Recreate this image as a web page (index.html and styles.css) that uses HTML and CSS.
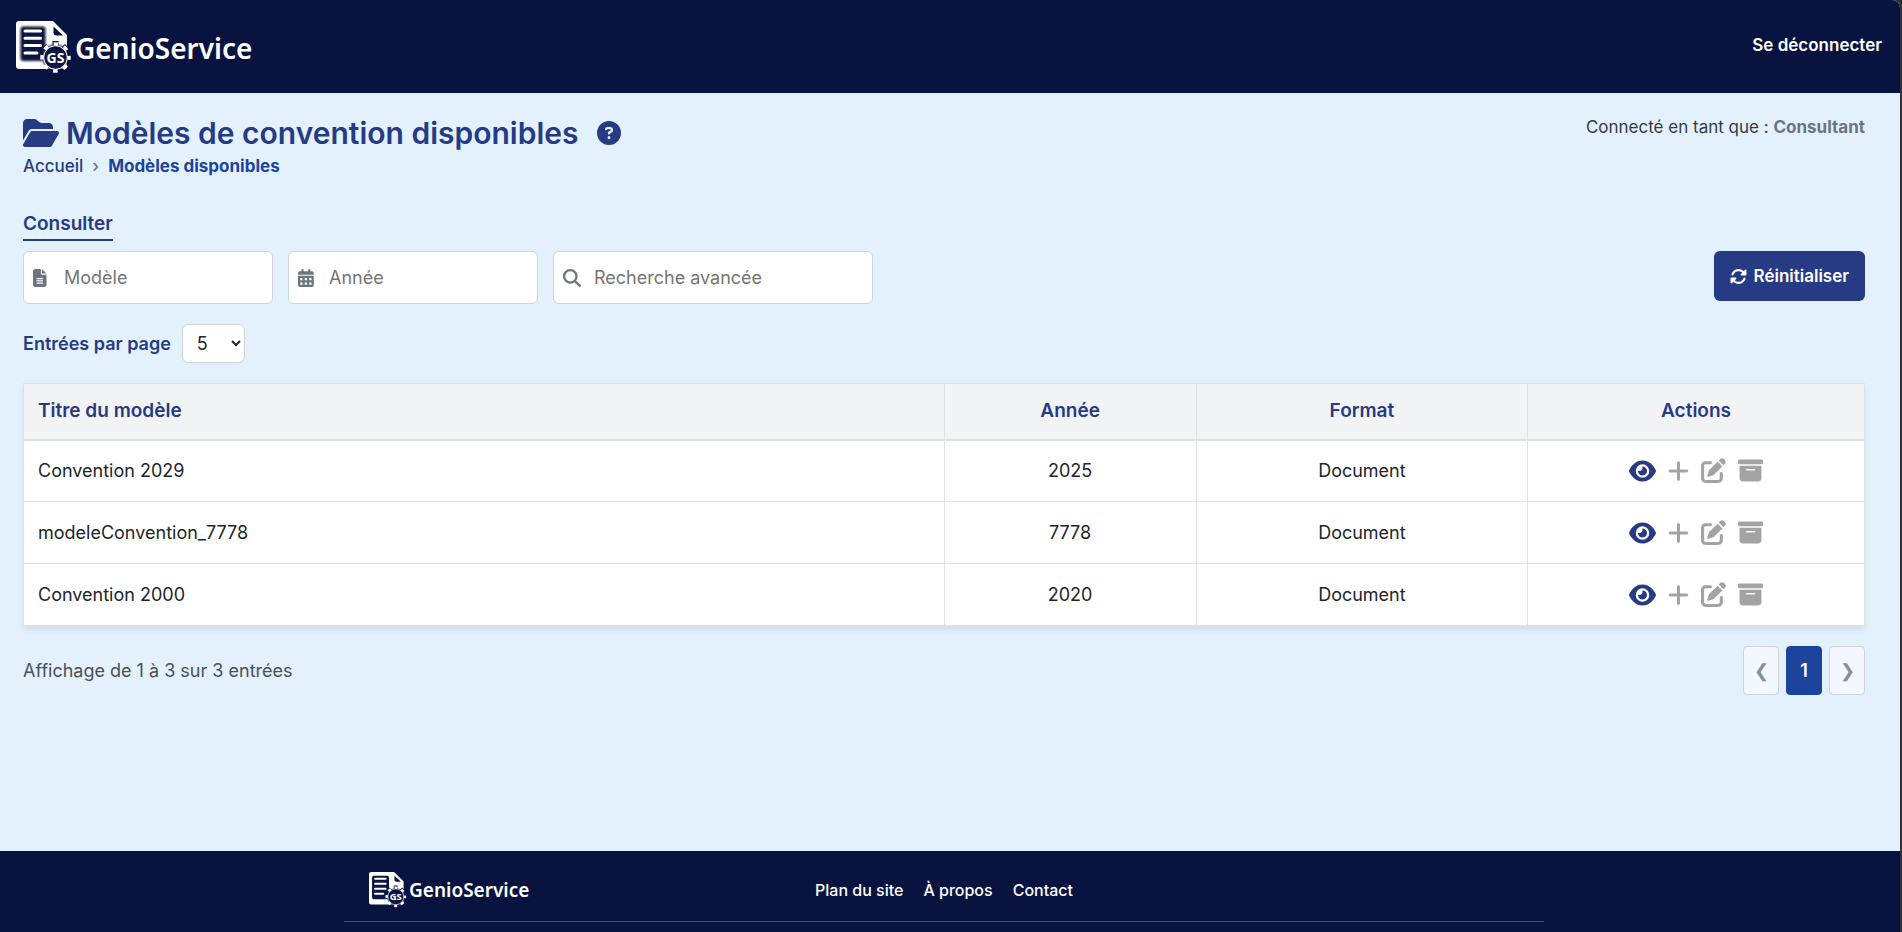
FILE: index.html
```html
<!DOCTYPE html>
<html lang="fr">
<head>
<meta charset="utf-8">
<title>GenioService – Modèles de convention disponibles</title>
<link rel="stylesheet" href="styles.css">
</head>
<body>
<svg class="sprite" aria-hidden="true">
  <filter id="soft" x="-20%" y="-20%" width="140%" height="140%"><feGaussianBlur stdDeviation="1"/></filter>
  <symbol id="logo" viewBox="0 0 56 53">
    <path fill="#fff" fill-rule="evenodd" d="M3 0H37L51 14V46Q51 48 48 48H3Q0 48 0 45V3Q0 0 3 0ZM37.500 5.500V11.500Q37.500 14.500 40.500 14.500H47Z"/>
    <path fill="#08133f" filter="url(#soft)" d="M7 5.500H27Q29.500 5.500 29.500 9V26L27 40H7Q4.500 40 4.500 37V9Q4.500 5.500 7 5.500Z"/>
    <path stroke="#fff" stroke-width="3" stroke-linecap="round" d="M9 10H24.500M9 17.300H24.500M9 24.500H24.500M9 32H21"/>
    <circle cx="39.500" cy="36.500" r="13" fill="#08133f" filter="url(#soft)"/>
    <path stroke="#08133f" stroke-width="6" d="M39.500 20V30M28 25L32 29M51 25L47 29"/>
    <circle cx="39.500" cy="36.500" r="13.500" fill="none" stroke="#fff" stroke-width="3.500" stroke-dasharray="4.500 6.103" stroke-dashoffset="2.250"/>
    <circle cx="39.500" cy="36.500" r="11.800" fill="none" stroke="#fff" stroke-width="1"/>
  </symbol>
  <symbol id="folder" viewBox="0 0 576 512"><path d="M88.700 223.800L0 375.800V96C0 60.700 28.700 32 64 32H181.500c17 0 33.300 6.700 45.300 18.700l26.500 26.500c12 12 28.300 18.700 45.300 18.700H416c35.300 0 64 28.700 64 64v32H144c-22.800 0-43.800 12.100-55.300 31.800zm27.600 16.100C122.100 230 132.600 224 144 224H544c11.500 0 22 6.100 27.700 16.100s5.700 22.200-.1 32.100l-112 192C453.900 474 443.400 480 432 480H32c-11.500 0-22-6.100-27.700-16.100s-5.700-22.200 .1-32.100l112-192z"/></symbol>
  <symbol id="help" viewBox="0 0 512 512"><path d="M256 512A256 256 0 1 0 256 0a256 256 0 1 0 0 512zM169.800 165.300c7.900-22.300 29.100-37.300 52.800-37.300h58.300c34.900 0 63.100 28.300 63.100 63.100c0 22.600-12.100 43.500-31.700 54.800L280 264.400c-.2 13-10.900 23.600-24 23.600c-13.300 0-24-10.700-24-24V250.500c0-8.600 4.600-16.500 12.100-20.800l44.300-25.400c4.700-2.700 7.600-7.700 7.600-13.100c0-8.400-6.800-15.100-15.100-15.100H222.600c-3.400 0-6.400 2.100-7.500 5.300l-.4 1.200c-4.400 12.500-18.200 19-30.600 14.600s-19-18.200-14.600-30.600l.4-1.200zM224 352a32 32 0 1 1 64 0 32 32 0 1 1 -64 0z"/></symbol>
  <symbol id="file" viewBox="0 0 384 512" preserveAspectRatio="xMinYMid"><path d="M64 0C28.700 0 0 28.700 0 64V448c0 35.300 28.700 64 64 64H320c35.300 0 64-28.700 64-64V160H256c-17.700 0-32-14.300-32-32V0H64zM256 0V128H384L256 0zM112 256H272c8.800 0 16 7.200 16 16s-7.200 16-16 16H112c-8.800 0-16-7.200-16-16s7.200-16 16-16zm0 64H272c8.800 0 16 7.200 16 16s-7.200 16-16 16H112c-8.800 0-16-7.200-16-16s7.200-16 16-16zm0 64H272c8.800 0 16 7.200 16 16s-7.200 16-16 16H112c-8.800 0-16-7.200-16-16s7.200-16 16-16z"/></symbol>
  <symbol id="calendar" viewBox="0 0 448 512" preserveAspectRatio="xMinYMid"><path fill-rule="evenodd" d="M128 0c17.700 0 32 14.300 32 32V64H288V32c0-17.700 14.300-32 32-32s32 14.300 32 32V64h48c26.500 0 48 21.500 48 48v48H0V112C0 85.500 21.500 64 48 64H96V32c0-17.700 14.300-32 32-32zM0 192H448V464c0 26.500-21.500 48-48 48H48c-26.500 0-48-21.500-48-48V192zM64 256v64h64v-64zM192 256v64h64v-64zM320 256v64h64v-64zM64 384v64h64v-64zM192 384v64h64v-64zM320 384v64h64v-64z"/></symbol>
  <symbol id="search" viewBox="0 0 512 512"><path d="M416 208c0 45.900-14.900 88.300-40 122.700L502.600 457.400c12.500 12.500 12.500 32.800 0 45.300s-32.800 12.500-45.300 0L330.700 376c-34.400 25.200-76.800 40-122.700 40C93.100 416 0 322.900 0 208S93.100 0 208 0S416 93.100 416 208zM208 352a144 144 0 1 0 0-288 144 144 0 1 0 0 288z"/></symbol>
  <symbol id="rotate" viewBox="0 0 512 512"><path d="M142.900 142.900c62.200-62.200 162.700-62.500 225.300-1L327 183c-6.900 6.900-8.900 17.200-5.200 26.200s12.500 14.800 22.200 14.800H472c13.300 0 24-10.700 24-24V72c0-9.700-5.800-18.500-14.800-22.200s-19.300-1.700-26.200 5.200L413.400 96.600c-87.600-86.500-228.700-86.200-315.800 1C73.200 122 55.600 150.700 44.800 181.400c-5.900 16.700 2.900 34.900 19.500 40.800s34.900-2.900 40.800-19.500c7.700-21.800 20.200-42.300 37.800-59.800zM16 312V440c0 9.700 5.800 18.500 14.800 22.200s19.300 1.700 26.200-5.200l41.600-41.600c87.600 86.500 228.700 86.200 315.800-1c24.400-24.400 42.100-53.100 52.900-83.700c5.900-16.700-2.900-34.900-19.500-40.800s-34.900 2.900-40.800 19.500c-7.700 21.800-20.200 42.300-37.800 59.800c-62.200 62.200-162.700 62.500-225.300 1L185 329c6.900-6.900 8.900-17.200 5.200-26.200s-12.500-14.800-22.200-14.800H40c-13.300 0-24 10.700-24 24z"/></symbol>
  <symbol id="eye" viewBox="0 0 576 512"><path d="M288 32c-80.800 0-145.500 36.800-192.600 80.600C48.600 156 17.300 208 2.500 243.700c-3.300 7.900-3.300 16.700 0 24.600C17.300 304 48.600 356 95.400 399.400C142.500 443.200 207.200 480 288 480s145.500-36.800 192.600-80.600c46.800-43.500 78.100-95.400 93-131.100c3.300-7.900 3.300-16.700 0-24.600c-14.900-35.700-46.200-87.700-93-131.100C433.500 68.800 368.800 32 288 32zM144 256a144 144 0 1 1 288 0 144 144 0 1 1 -288 0zm144-64c0 35.300-28.700 64-64 64c-7.100 0-13.900-1.200-20.300-3.300c-5.500-1.800-11.900 1.600-11.700 7.400c.3 6.900 1.300 13.800 3.200 20.700c13.700 51.200 66.400 81.600 117.600 67.900s81.600-66.400 67.900-117.600c-11.100-41.500-47.800-69.400-88.600-71.100c-5.800-.2-9.200 6.100-7.400 11.700c2.100 6.400 3.300 13.200 3.300 20.300z"/></symbol>
  <symbol id="plus" viewBox="0 0 448 512"><path d="M256 80c0-17.700-14.300-32-32-32s-32 14.300-32 32V224H48c-17.700 0-32 14.300-32 32s14.300 32 32 32H192V432c0 17.700 14.300 32 32 32s32-14.300 32-32V288H400c17.700 0 32-14.300 32-32s-14.300-32-32-32H256V80z"/></symbol>
  <symbol id="edit" viewBox="0 0 512 512"><path d="M471.600 21.700c-21.900-21.900-57.300-21.900-79.200 0L362.300 51.700l97.900 97.900 30.100-30.100c21.900-21.900 21.900-57.300 0-79.200L471.600 21.700zm-299.200 220c-6.100 6.100-10.800 13.600-13.500 21.900l-29.600 88.800c-2.900 8.600-.6 18.100 5.800 24.600s15.900 8.700 24.600 5.800l88.800-29.600c8.200-2.700 15.700-7.400 21.900-13.500L437.700 172.300 339.700 74.300 172.400 241.700zM96 64C43 64 0 107 0 160V416c0 53 43 96 96 96H352c53 0 96-43 96-96V320c0-17.700-14.300-32-32-32s-32 14.300-32 32v96c0 17.700-14.300 32-32 32H96c-17.700 0-32-14.300-32-32V160c0-17.700 14.300-32 32-32h96c17.700 0 32-14.300 32-32s-14.300-32-32-32H96z"/></symbol>
  <symbol id="archive" viewBox="0 0 512 512"><path d="M32 32H480c17.700 0 32 14.300 32 32V96c0 17.700-14.300 32-32 32H32C14.300 128 0 113.700 0 96V64C0 46.300 14.300 32 32 32zm0 128H480V416c0 35.300-28.700 64-64 64H96c-35.300 0-64-28.700-64-64V160zm128 80c0 8.800 7.200 16 16 16H336c8.800 0 16-7.200 16-16s-7.200-16-16-16H176c-8.800 0-16 7.200-16 16z"/></symbol>
</svg>

<div class="page">
  <header class="topbar">
    <a class="brand" href="#"><svg class="brand-mark" viewBox="0 0 56 53"><use href="#logo" width="56" height="53"/><text class="logo-initials" x="39.500" y="41.500" text-anchor="middle">GS</text></svg><span>GenioService</span></a>
    <a class="logout" href="#">Se déconnecter</a>
  </header>

  <main class="main">
    <div class="heading">
      <div>
        <h1 class="title"><svg class="title-icon"><use href="#folder"/></svg><span>Modèles de convention disponibles</span>
          <button class="help" type="button" aria-label="Aide"><svg class="help-icon"><use href="#help"/></svg></button></h1>
        <nav class="crumbs" aria-label="Fil d'Ariane"><a href="#">Accueil</a><span class="sep">›</span><strong>Modèles disponibles</strong></nav>
      </div>
      <p class="user">Connecté en tant que : <strong>Consultant</strong></p>
    </div>

    <nav class="tabs"><a class="tab" href="#">Consulter</a></nav>

    <div class="filters">
      <label class="field"><svg class="field-icon"><use href="#file"/></svg><input type="text" placeholder="Modèle" aria-label="Modèle"></label>
      <label class="field"><svg class="field-icon"><use href="#calendar"/></svg><input type="text" placeholder="Année" aria-label="Année"></label>
      <label class="field field-wide"><svg class="field-icon"><use href="#search"/></svg><input type="text" placeholder="Recherche avancée" aria-label="Recherche avancée"></label>
      <button class="reset" type="button"><svg class="reset-icon"><use href="#rotate"/></svg>Réinitialiser</button>
    </div>

    <div class="per-page">
      <label for="per-page">Entrées par page</label>
      <select id="per-page"><option>5</option><option>10</option><option>25</option></select>
    </div>

    <table class="models">
      <colgroup><col class="col-title"><col class="col-year"><col class="col-format"><col class="col-actions"></colgroup>
      <thead><tr><th>Titre du modèle</th><th>Année</th><th>Format</th><th>Actions</th></tr></thead>
      <tbody>
        <tr><td>Convention 2029</td><td>2025</td><td>Document</td><td><div class="actions">
          <button class="view" type="button" aria-label="Voir"><svg class="i-eye"><use href="#eye"/></svg></button><button type="button" aria-label="Ajouter"><svg class="i-plus"><use href="#plus"/></svg></button><button type="button" aria-label="Modifier"><svg class="i-box"><use href="#edit"/></svg></button><button type="button" aria-label="Archiver"><svg class="i-box"><use href="#archive"/></svg></button></div></td></tr>
        <tr><td>modeleConvention_7778</td><td>7778</td><td>Document</td><td><div class="actions">
          <button class="view" type="button" aria-label="Voir"><svg class="i-eye"><use href="#eye"/></svg></button><button type="button" aria-label="Ajouter"><svg class="i-plus"><use href="#plus"/></svg></button><button type="button" aria-label="Modifier"><svg class="i-box"><use href="#edit"/></svg></button><button type="button" aria-label="Archiver"><svg class="i-box"><use href="#archive"/></svg></button></div></td></tr>
        <tr><td>Convention 2000</td><td>2020</td><td>Document</td><td><div class="actions">
          <button class="view" type="button" aria-label="Voir"><svg class="i-eye"><use href="#eye"/></svg></button><button type="button" aria-label="Ajouter"><svg class="i-plus"><use href="#plus"/></svg></button><button type="button" aria-label="Modifier"><svg class="i-box"><use href="#edit"/></svg></button><button type="button" aria-label="Archiver"><svg class="i-box"><use href="#archive"/></svg></button></div></td></tr>
      </tbody>
    </table>

    <div class="table-foot">
      <p>Affichage de 1 à 3 sur 3 entrées</p>
      <nav class="pager" aria-label="Pagination">
        <button type="button" aria-label="Précédent">❮</button><button class="current" type="button">1</button><button type="button" aria-label="Suivant">❯</button>
      </nav>
    </div>
  </main>

  <footer class="footer">
    <div class="footer-inner">
      <a class="brand brand-small" href="#"><svg class="brand-mark" viewBox="0 0 56 53"><use href="#logo" width="56" height="53"/><text class="logo-initials" x="39.500" y="41.500" text-anchor="middle">GS</text></svg><span>GenioService</span></a>
      <nav class="footer-links"><a href="#">Plan du site</a><a href="#">À propos</a><a href="#">Contact</a></nav>
    </div>
  </footer>
</div>
</body>
</html>
```
FILE: styles.css
```css
* { box-sizing: border-box; }
html { background: #303236; }
body {
  margin: 0;
  padding-right: 2px;
  font-family: Inter, "Liberation Sans", sans-serif;
  font-size: 18px;
  line-height: 24px;
  color: #212529;
}
a { color: inherit; text-decoration: none; }
button, input, select { font: inherit; color: inherit; }
button { border: 0; background: none; padding: 0; cursor: pointer; }
svg { display: block; fill: currentColor; }
p, h1 { margin: 0; }
.sprite { position: absolute; width: 0; height: 0; }

.page {
  display: flex;
  flex-direction: column;
  min-height: 100vh;
  background: #e3f1fd;
  border-top-right-radius: 8px;
  overflow: hidden;
}

.topbar {
  display: flex;
  align-items: center;
  justify-content: space-between;
  height: 93px;
  padding: 0 18px 0 16px;
  background: #08133f;
  color: #fff;
}
.brand {
  display: flex;
  align-items: center;
  gap: 3px;
  padding-top: 2px;
  color: #fff;
  font: 600 28px/36px "Noto Sans", "Open Sans", sans-serif;
}
.brand-mark { width: 56px; height: 53px; }
.logo-initials { font: 700 14px "Noto Sans", sans-serif; fill: #fff; }
.logout { font-size: 17px; font-weight: 600; padding-bottom: 4px; }

.main { flex: 1; padding: 21px 35px 0 23px; }
.heading { display: flex; justify-content: space-between; }
.title {
  display: flex;
  align-items: center;
  gap: 7px;
  font-size: 30px;
  font-weight: 600;
  line-height: 38px;
  color: #273a84;
}
.title-icon { width: 36px; height: 32px; }
.help { margin-left: 12px; color: #273a84; }
.help-icon { width: 24px; height: 24px; }
.crumbs { display: flex; gap: 9px; margin-top: 2px; font-size: 17px; font-weight: 500; color: #273a84; }
.crumbs .sep { color: #6c757d; }
.crumbs strong { font-weight: 700; color: #1d449c; }
.user { margin-top: 1px; font-size: 17px; color: #343a40; }
.user strong { font-weight: 700; color: #6c757d; }

.tabs { display: flex; margin-top: 34px; }
.tab {
  padding-bottom: 3px;
  border-bottom: 2px solid #273a84;
  font-size: 19px;
  font-weight: 600;
  color: #273a84;
}

.filters { display: flex; align-items: flex-start; gap: 15px; margin-top: 10px; }
.field {
  display: flex;
  align-items: center;
  width: 250px;
  height: 53px;
  padding-left: 9px;
  border: 1px solid #ced4da;
  border-radius: 6px;
  background: #fff;
}
.field-wide { width: 320px; }
.field-icon { flex: none; height: 18px; width: 18px; color: #6c757d; }
.field input {
  flex: 1;
  min-width: 0;
  margin-left: 13px;
  padding: 0;
  border: 0;
  outline: 0;
  background: none;
}
.field input::placeholder { color: #757575; opacity: 1; }
.reset {
  display: flex;
  align-items: center;
  gap: 7px;
  height: 50px;
  margin-left: auto;
  padding: 0 16px;
  border-radius: 6px;
  background: #273a84;
  color: #fff;
  font-size: 17px;
  font-weight: 600;
}
.reset-icon { width: 17px; height: 17px; }

.per-page {
  display: flex;
  align-items: center;
  gap: 11px;
  margin-top: 20px;
  font-weight: 600;
  color: #273a84;
}
.per-page select {
  width: 63px;
  height: 39px;
  padding-left: 10px;
  border: 1px solid #ced4da;
  border-radius: 6px;
  background: #fff;
  font-weight: 400;
  color: #212529;
}

.models {
  width: 100%;
  margin-top: 20px;
  table-layout: fixed;
  border-collapse: collapse;
  background: #fff;
  box-shadow: 0 4px 6px rgba(0, 0, 0, .08);
}
.col-title { width: 50%; }
.col-year { width: 13.700%; }
.col-format { width: 18%; }
.models th, .models td {
  padding: 0 14px;
  border: 1px solid #dee2e6;
  text-align: center;
}
.models th {
  height: 56px;
  border-bottom-width: 2px;
  background: #f1f3f5;
  font-size: 19px;
  font-weight: 600;
  color: #273a84;
}
.models td { height: 62px; }
.models th:first-child, .models td:first-child { text-align: left; }
.actions { display: flex; justify-content: center; align-items: center; gap: 12px; color: #a3a3a3; }
.actions .view { color: #273a84; }
.i-eye { width: 27px; height: 24px; }
.i-plus { width: 21px; height: 24px; }
.i-box { width: 25px; height: 25px; }

.table-foot {
  display: flex;
  align-items: center;
  justify-content: space-between;
  margin-top: 20px;
  color: #495057;
}
.pager { display: flex; gap: 7px; }
.pager button {
  width: 36px;
  height: 49px;
  border: 1px solid #ced4da;
  border-radius: 4px;
  background: #f3f7ff;
  color: #868e96;
}
.pager .current { border-color: #1d449c; background: #1d449c; color: #fff; font-weight: 600; }

.footer { height: 81px; padding-right: 12px; background: #08133f; color: #fff; }
.footer-inner {
  display: grid;
  grid-template-columns: 1fr auto 1fr;
  align-items: center;
  max-width: 1200px;
  height: 71px;
  margin: 0 auto;
  padding: 8px 25px 0;
  border-bottom: 1px solid #495067;
}
.brand-small { gap: 2px; padding-top: 0; font-size: 19px; line-height: 24px; }
.brand-small .brand-mark { width: 38px; height: 36px; }
.footer-links { display: flex; gap: 20px; font-size: 16px; font-weight: 500; }
```
